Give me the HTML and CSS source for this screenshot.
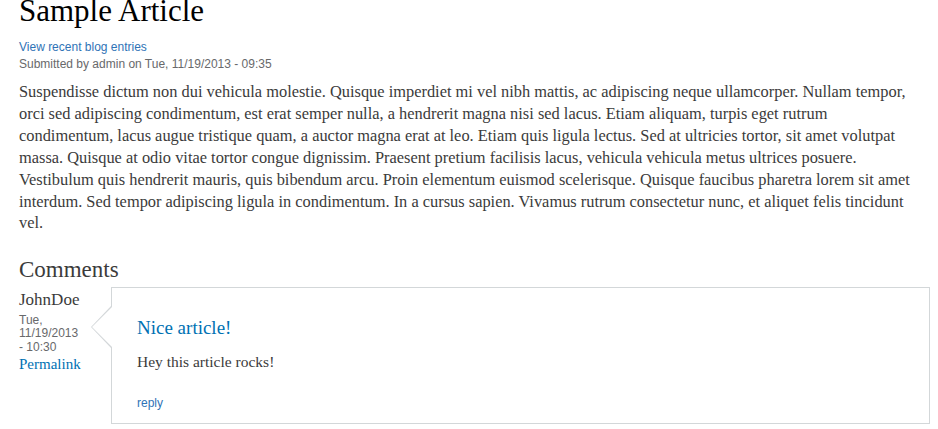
FILE: index.html
```html
<!DOCTYPE html>
<html>
<head>
<meta charset="utf-8">
<link rel="stylesheet" href="styles.css">
</head>
<body>
<div class="page">
  <article class="node">
    <h1 class="title">Sample Article</h1>
    <div class="meta">
      <a class="meta-link" href="#">View recent blog entries</a>
      <div class="submitted">Submitted by admin on Tue, 11/19/2013 - 09:35</div>
    </div>
    <div class="content">
      <p>Suspendisse dictum non dui vehicula molestie. Quisque imperdiet mi vel nibh mattis, ac adipiscing neque ullamcorper. Nullam tempor, orci sed adipiscing condimentum, est erat semper nulla, a hendrerit magna nisi sed lacus. Etiam aliquam, turpis eget rutrum condimentum, lacus augue tristique quam, a auctor magna erat at leo. Etiam quis ligula lectus. Sed at ultricies tortor, sit amet volutpat massa. Quisque at odio vitae tortor congue dignissim. Praesent pretium facilisis lacus, vehicula vehicula metus ultrices posuere. Vestibulum quis hendrerit mauris, quis bibendum arcu. Proin elementum euismod scelerisque. Quisque faucibus pharetra lorem sit amet interdum. Sed tempor adipiscing ligula in condimentum. In a cursus sapien. Vivamus rutrum consectetur nunc, et aliquet felis tincidunt vel.</p>
    </div>
  </article>
  <section class="comments">
    <h2 class="comments-title">Comments</h2>
    <div class="comment">
      <div class="attribution">
        <div class="author">JohnDoe</div>
        <div class="date">Tue, 11/19/2013 - 10:30</div>
        <a class="permalink" href="#">Permalink</a>
      </div>
      <div class="comment-box">
        <span class="arrow"></span>
        <h3 class="comment-title"><a href="#">Nice article!</a></h3>
        <p class="comment-body">Hey this article rocks!</p>
        <a class="reply" href="#">reply</a>
      </div>
    </div>
  </section>
</div>
</body>
</html>
```
FILE: styles.css
```css
html, body {
  margin: 0;
  padding: 0;
  background: #fff;
  overflow: hidden;
}
body {
  font-family: "Liberation Serif", "Times New Roman", serif;
  color: #3b3b3b;
}
a {
  color: #0071b3;
  text-decoration: none;
}
.page {
  padding: 0 8px 0 19px;
}
.title {
  font-weight: normal;
  font-size: 31px;
  line-height: 32px;
  color: #000;
  margin: -5.5px 0 0;
}
.meta {
  font-family: "Liberation Sans", Arial, sans-serif;
  font-size: 12px;
  line-height: 17px;
  margin-top: 12.5px;
}
.meta-link {
  display: block;
  color: #2f73b6;
}
.submitted {
  color: #68696b;
}
.content {
  font-size: 16.4px;
  line-height: 21.9px;
}
.content p {
  max-width: 903px;
  margin: 8px 0 0;
}
.comments-title {
  font-weight: normal;
  font-size: 23px;
  line-height: 26px;
  margin: 22.8px 0 0;
  color: #3b3b3b;
}
.comment {
  display: flex;
}
.attribution {
  width: 92px;
  flex: none;
}
.author {
  font-size: 17px;
  line-height: 20px;
  margin-top: 6.6px;
}
.date {
  font-family: "Liberation Sans", Arial, sans-serif;
  font-size: 12px;
  line-height: 13.5px;
  color: #68696b;
  width: 64px;
  margin-top: 3.9px;
}
.permalink {
  font-size: 15px;
  line-height: 20px;
  display: block;
}
.comment-box {
  position: relative;
  flex: 1;
  border: 1px solid #d3d7d9;
  padding: 28.6px 25px 11.2px;
  margin-top: 3.4px;
}
.arrow {
  position: absolute;
  left: -21px;
  top: 18px;
  width: 0;
  height: 0;
  border-style: solid;
  border-width: 21px 20px 21px 0;
  border-color: transparent #d3d7d9 transparent transparent;
}
.arrow::after {
  content: "";
  position: absolute;
  left: 1px;
  top: -20px;
  width: 0;
  height: 0;
  border-style: solid;
  border-width: 20px 20px 20px 0;
  border-color: transparent #fff transparent transparent;
}
.comment-title {
  font-weight: normal;
  font-size: 19px;
  line-height: 24px;
  margin: 0;
}
.comment-body {
  font-size: 15.5px;
  line-height: 20px;
  margin: 12.2px 0 0;
}
.reply {
  display: block;
  font-family: "Liberation Sans", Arial, sans-serif;
  font-size: 12px;
  line-height: 16px;
  margin-top: 23px;
  color: #2f73b6;
}
```
